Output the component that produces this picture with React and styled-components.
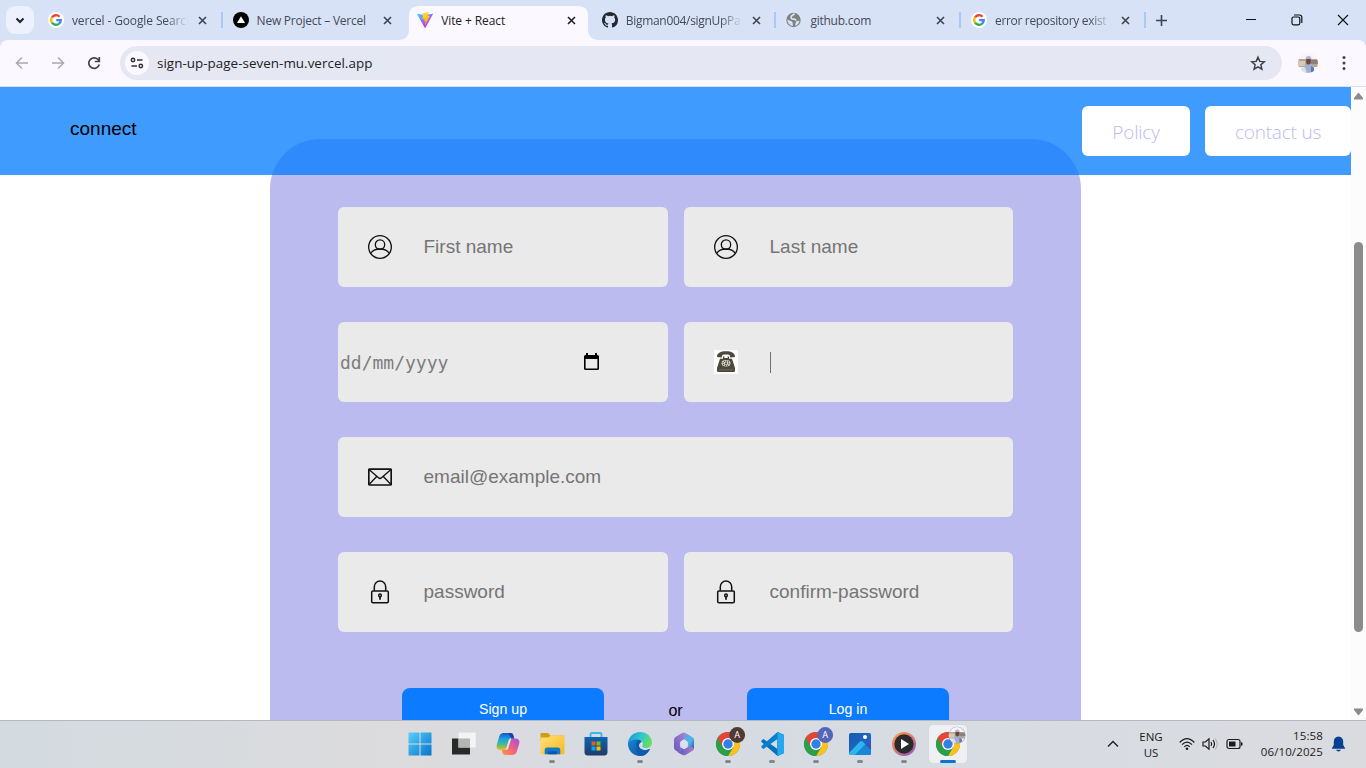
import React from "react";
import styled, { createGlobalStyle } from "styled-components";

const GlobalStyle = createGlobalStyle`
  * { box-sizing: border-box; }
  html, body { margin: 0; overflow: hidden; }
  body { font-family: "Open Sans", "Noto Sans", sans-serif; background: #fff; }
  svg { display: block; flex: none; }
`;

/* ---------- browser frame ---------- */
const Screen = styled.div`
  width: 1366px;
  height: 768px;
  display: flex;
  flex-direction: column;
  overflow: hidden;
`;
const TabStrip = styled.header`
  height: 40px;
  flex: none;
  display: flex;
  align-items: flex-start;
  background: #d8e2f6;
  padding-left: 6px;
`;
const TabSearch = styled.button`
  width: 28px;
  height: 28px;
  margin: 6px 4px 0 0;
  padding: 0;
  border: 0;
  border-radius: 9px;
  background: #edf0fd;
  display: grid;
  place-items: center;
`;
const TabBox = styled.div`
  width: 184.6px;
  height: 40px;
  flex: none;
  display: flex;
  align-items: center;
  padding: 0 0 0 10px;
  position: relative;
  color: ${(p) => (p.$active ? "#1f2024" : "#454a57")};
  z-index: ${(p) => (p.$active ? 1 : 0)};
`;
const TabShape = styled.svg`
  position: absolute;
  left: -7px;
  top: 0;
  z-index: -1;
`;
const TabTitle = styled.span`
  width: 116px;
  height: 20px;
  margin: 2px 0 0 8px;
  font-size: 12px;
  line-height: 20px;
  letter-spacing: ${(p) => p.$track}px;
  white-space: nowrap;
  overflow: hidden;
  ${(p) => p.$fade && "mask-image: linear-gradient(90deg, #000 94px, transparent 116px);"}
`;
const CloseSlot = styled.span`
  width: 29px;
  height: 20px;
  display: grid;
  place-items: center;
`;
const Divider = styled.i`
  width: 2px;
  height: 16px;
  margin: 0 0 0 auto;
  background: #a8c7fa;
`;
const NewTab = styled.span`
  width: 32px;
  height: 40px;
  display: grid;
  place-items: center;
`;
const WindowButtons = styled.div`
  margin-left: auto;
  height: 40px;
  display: flex;
  svg { margin: 14px 17px 0; }
`;
const Toolbar = styled.div`
  height: 47px;
  display: flex;
  align-items: center;
  background: #fbf9ff;
  border-bottom: 1px solid #dfdfea;
  border-radius: 8px 8px 0 0;
  padding: 0 15px 0 14px;
`;
const ToolbarBack = styled.div`
  background: #d8e2f6;
  flex: none;
`;
const NavIcons = styled.div`
  display: flex;
  gap: 20px;
  width: 106px;
`;
const Omnibox = styled.div`
  width: 1162px;
  height: 34px;
  border-radius: 17px;
  background: #e5e8f3;
  display: flex;
  align-items: center;
  padding: 0 15px 0 5px;
`;
const SiteInfo = styled.span`
  width: 24px;
  height: 24px;
  border-radius: 50%;
  background: #fbf9ff;
  display: grid;
  place-items: center;
`;
const Address = styled.span`
  flex: 1;
  margin-left: 8px;
  font-size: 13.4px;
  letter-spacing: 0.04px;
  color: #202124;
`;
const Profile = styled.span`
  margin: 0 17px 0 16px;
`;

/* ---------- page ---------- */
const Viewport = styled.div`
  height: 633px;
  flex: none;
  display: flex;
  overflow: hidden;
  background: #fff;
`;
const Page = styled.main`
  width: 1351px;
  font-family: "Liberation Sans", Arial, sans-serif;
`;
const NavBar = styled.nav`
  height: 88px;
  position: relative;
  z-index: 1;
  display: flex;
  align-items: flex-start;
  padding: 19px 0 0 70px;
  background: rgba(0, 122, 255, 0.75);
`;
const Brand = styled.span`
  font-size: 19px;
  line-height: 22px;
  margin: 12px auto 0 0;
  color: #000;
`;
const NavLink = styled.a`
  height: 50px;
  width: ${(p) => p.$w}px;
  margin-left: 15px;
  border-radius: 6px;
  background: #fff;
  color: #bbbaf0;
  font: 300 19px/52px "Open Sans", "Noto Sans", sans-serif;
  letter-spacing: ${(p) => p.$track}px;
  text-align: center;
  white-space: nowrap;
`;
const Card = styled.form`
  width: 811px;
  height: 700px;
  margin: -36px 0 0 270px;
  padding: 68px 68px 0;
  border-radius: 50px;
  background: #bbbbef;
`;
const Fields = styled.div`
  display: grid;
  grid-template-columns: 330px 329px;
  gap: 35px 16px;
`;
const Field = styled.label`
  height: 80px;
  border-radius: 6px;
  background: #eaeaea;
  display: flex;
  align-items: center;
  padding-left: 30px;
  font-size: 19px;
  color: #757575;
  grid-column: ${(p) => (p.$wide ? "1 / -1" : "auto")};
`;
const Placeholder = styled.span`
  margin-left: 31.5px;
`;
const DateField = styled(Field)`
  padding: 0 68px 0 2px;
  justify-content: space-between;
  font: 18px "DejaVu Sans Mono", monospace;
  color: #7d7d7d;
`;
const Caret = styled.i`
  width: 1px;
  height: 21px;
  margin-left: 32px;
  background: #6f6f6f;
`;
const Actions = styled.div`
  margin-top: 56px;
  display: flex;
  padding-left: 64px;
`;
const Action = styled.button`
  width: 202px;
  height: 44px;
  padding: 0 0 2px;
  border: 0;
  border-radius: 8px;
  background: #0d7bff;
  color: #fff;
  font: 14.2px "Liberation Sans", Arial, sans-serif;
`;
const Or = styled.span`
  width: 143px;
  text-align: center;
  font-size: 16px;
  line-height: 46px;
  color: #000;
`;
const Scrollbar = styled.aside`
  width: 15px;
  display: flex;
  flex-direction: column;
  align-items: center;
  background: #fcfcfc;
  padding: 5px 0 4px;
`;
const Thumb = styled.div`
  width: 9px;
  height: 390px;
  margin: 142px 0 auto;
  border-radius: 5px;
  background: #8b8b8b;
`;

/* ---------- taskbar ---------- */
const Taskbar = styled.footer`
  height: 48px;
  flex: none;
  display: flex;
  border-top: 1px solid #b6b8bf;
  padding-left: 398px;
  background: linear-gradient(90deg, #d3dbe0 0, #dcdbdd 29%, #d6dbe3 48%, #d7dce3 66%, #dadbdf 100%);
`;
const AppSlot = styled.span`
  width: 44px;
  height: 47px;
  display: flex;
  flex-direction: column;
  align-items: center;
  padding-top: 4px;
`;
const AppTile = styled.span`
  width: 38px;
  height: 38px;
  border-radius: 4px;
  background: ${(p) => (p.$active ? "#eef0f3" : "transparent")};
  box-shadow: ${(p) => (p.$active ? "0 0 1px #b9bdc6" : "none")};
  display: flex;
  flex-direction: column;
  align-items: center;
`;
const IconHolder = styled.span`
  width: 30px;
  height: 28px;
  flex: none;
  display: flex;
  justify-content: center;
  align-items: flex-end;
  margin: 3px 0 4px;
  svg { overflow: visible; }
`;
const Running = styled.i`
  width: ${(p) => (p.$active ? 16 : 6)}px;
  height: 3px;
  flex: none;
  border-radius: 2px;
  background: ${(p) => (p.$active ? "#0b74cf" : "#85878b")};
`;
const Tray = styled.div`
  margin-left: auto;
  display: flex;
  align-items: center;
  padding: 0 20px 1px 0;
  color: #1b1b1b;
  font-size: 11.5px;
  line-height: 16px;
`;
const Language = styled.div`
  width: 40px;
  margin: 2px 8px 0 12px;
  text-align: center;
`;
const Status = styled.div`
  display: flex;
  align-items: center;
  gap: 7px;
`;
const Clock = styled.div`
  width: 70px;
  margin: 0 8px 0 10px;
  text-align: right;
  letter-spacing: 0.12px;
  white-space: nowrap;
`;

/* ---------- icons ---------- */
const Google = () => (
  <svg width="16" height="16" viewBox="0 0 16 16">
    <circle cx="8" cy="8" r="8" fill="#fff" />
    <g fill="none" strokeWidth="2.3">
      <path d="M11.5 4.7A4.8 4.8 0 0 0 4 5.4" stroke="#ea4335" />
      <path d="M4 5.3A4.8 4.8 0 0 0 4 10.7" stroke="#fbbc05" />
      <path d="M4 10.6A4.8 4.8 0 0 0 11.2 11.6" stroke="#34a853" />
      <path d="M8.2 8.1H12.8A4.8 4.8 0 0 1 11 11.7" stroke="#4285f4" />
    </g>
  </svg>
);
const VercelMark = () => (
  <svg width="16" height="16" viewBox="0 0 16 16">
    <circle cx="8" cy="8" r="8" />
    <path d="M8 4.2 12 11H4z" fill="#fff" />
  </svg>
);
const ViteMark = () => (
  <svg width="16" height="16" viewBox="0 0 256 257">
    <defs>
      <linearGradient id="va" x1="0" x2=".6" y1=".05" y2=".8"><stop stopColor="#41d1ff" /><stop offset="1" stopColor="#bd34fe" /></linearGradient>
      <linearGradient id="vb" x1=".4" x2=".5" y1="0" y2=".9"><stop stopColor="#ffea83" /><stop offset=".1" stopColor="#ffdd35" /><stop offset="1" stopColor="#ffa800" /></linearGradient>
    </defs>
    <path fill="url(#va)" d="M255.153 37.938 134.897 252.976c-2.483 4.44-8.862 4.466-11.382.048L.875 37.958c-2.746-4.814 1.371-10.646 6.827-9.67l120.385 21.517a6.54 6.54 0 0 0 2.322-.004l117.867-21.483c5.438-.991 9.574 4.796 6.877 9.62Z" />
    <path fill="url(#vb)" d="M185.432.063 96.44 17.501a3.27 3.27 0 0 0-2.634 3.014l-5.474 92.456a3.27 3.27 0 0 0 3.997 3.378l24.777-5.718c2.318-.535 4.413 1.507 3.936 3.838l-7.361 36.047c-.495 2.426 1.782 4.5 4.151 3.78l15.304-4.649c2.372-.72 4.652 1.36 4.15 3.788l-11.698 56.621c-.732 3.542 3.979 5.473 5.943 2.437l1.313-2.028 72.516-144.72c1.215-2.423-.88-5.186-3.54-4.672l-25.505 4.922c-2.396.462-4.435-1.77-3.759-4.114l16.646-57.705c.677-2.35-1.37-4.583-3.769-4.113Z" />
  </svg>
);
const GitHubMark = () => (
  <svg width="16" height="16" viewBox="0 0 16 16">
    <path fill="#24292f" d="M8 0C3.58 0 0 3.58 0 8c0 3.54 2.29 6.53 5.47 7.59.4.07.55-.17.55-.38 0-.19-.01-.82-.01-1.49-2.01.37-2.53-.49-2.69-.94-.09-.23-.48-.94-.82-1.13-.28-.15-.68-.52-.01-.53.63-.01 1.08.58 1.23.82.72 1.21 1.87.87 2.33.66.07-.52.28-.87.51-1.07-1.78-.2-3.64-.89-3.64-3.95 0-.87.31-1.59.82-2.15-.08-.2-.36-1.02.08-2.12 0 0 .67-.21 2.2.82a7.6 7.6 0 0 1 4 0c1.53-1.04 2.2-.82 2.2-.82.44 1.1.16 1.92.08 2.12.51.56.82 1.27.82 2.15 0 3.07-1.87 3.75-3.65 3.95.29.25.54.73.54 1.48 0 1.07-.01 1.93-.01 2.2 0 .21.15.46.55.38A8.01 8.01 0 0 0 16 8c0-4.42-3.58-8-8-8" />
  </svg>
);
const GlobeMark = () => (
  <svg width="16" height="16" viewBox="0 0 16 16">
    <circle cx="7.5" cy="8" r="7.2" fill="#80807f" />
    <path d="M8.500 1.800 6.600 3.200Q4.800 4 5 5.600q.3 1.500 2.300 1.600h1.200q1.300.2 1.200 1.600" fill="none" stroke="#d8e2f6" strokeWidth="1.700" />
    <path d="M1.400 7.500 4.500 9q1.800.2 2.200 1.800l.2 3.200-2-.6Q1.200 11.500 1.400 7.500zM10 9.500l3.500-1q0 2.500-2.500 4.500l-2 .8z" fill="#d8e2f6" />
  </svg>
);
const CloseMark = ({ color = "#3e4350" }) => (
  <svg width="9" height="9" viewBox="0 0 9 9"><path d="m1 1 7 7M8 1 1 8" stroke={color} strokeWidth="1.6" /></svg>
);
const Person = () => (
  <svg width="24" height="24" viewBox="0 0 24 24" fill="none" stroke="#111" strokeWidth="1.3">
    <circle cx="12" cy="12" r="11.35" /><circle cx="12" cy="9.6" r="4.7" />
    <path d="M2.7 18.5C4.2 15.8 7.4 14 12 14s7.8 1.8 9.3 4.5" />
  </svg>
);
const Phone = () => (
  <svg width="24" height="24" viewBox="0 0 24 24">
    <path fill="#fcfcf8" d="M0 0h24v24H0z" />
    <path fill="#4d483e" d="M3 7C2.800 3 6.500 1.200 12 1.200S21.200 3 21 7l-4.400.6c-.8-.8-.6-2-1-2.700-2.300-.5-4.900-.5-7.200 0-.4.700-.2 1.900-1 2.700z" />
    <path fill="#4d483e" d="M9 6.500h1.300v1.400h3.400V6.500H15v2.300h3l3 9.200v3.400l-1.400.6H4.400L3 21.400V18l3-9.200h3z" />
    <ellipse cx="12" cy="13.300" rx="4.400" ry="3.300" fill="#dfded3" />
    <ellipse cx="12" cy="13.300" rx="3" ry="2.200" fill="none" stroke="#4d483e" strokeWidth="1.200" strokeDasharray="1.200 .8" />
    <circle cx="12" cy="13.300" r="1.100" fill="#4d483e" />
    <path d="M5 19.800h14" stroke="#77736a" strokeWidth=".8" />
  </svg>
);
const Mail = () => (
  <svg width="24" height="24" viewBox="0 0 24 24" fill="none" stroke="#111" strokeWidth="1.3" strokeLinejoin="round">
    <rect x=".8" y="4.200" width="22.400" height="15.800" rx=".8" strokeWidth="1.700" />
    <path d="m1 4.500 9.500 8.300c.9.800 2.100.8 3 0L23 4.500M1 19.500l7.700-8M23 19.500l-7.700-8" />
  </svg>
);
const Lock = () => (
  <svg width="24" height="24" viewBox="0 0 24 24" fill="none" stroke="#111" strokeWidth="1.500">
    <rect x="3.700" y="10.900" width="16.600" height="11.900" rx="1.200" />
    <path d="M6.300 10.700V6.700a5.700 5.700 0 0 1 11.400 0v4" />
    <circle cx="12" cy="15.400" r="1.300" /><path d="M12 16.500v3.300" strokeWidth="1.700" />
  </svg>
);
const Calendar = () => (
  <svg width="17" height="18" viewBox="0 0 17 18">
    <path d="M3 0h2v2h7V0h2v2h.5Q16 2 16 3.500v12Q16 17 14.500 17h-12Q1 17 1 15.500v-12Q1 2 2.500 2H3zM2.600 6v9.400h11.800V6z" fillRule="evenodd" />
  </svg>
);

const Windows = () => (
  <svg width="24" height="24" viewBox="0 0 24 24">
    <defs><linearGradient id="win" x1="0" y1="0" x2="1" y2="1"><stop stopColor="#55d0fb" /><stop offset="1" stopColor="#0873ca" /></linearGradient></defs>
    <path d="M.5.500h11v11H.500zm12 0h11v11h-11zm-12 12h11v11H.500zm12 0h11v11h-11z" fill="url(#win)" />
  </svg>
);
const TaskView = () => (
  <svg width="24" height="24" viewBox="0 0 24 24">
    <path d="M0 6.500h18v16H0z" fill="#272a29" />
    <path d="M6.500.500h17.200v15H6.500z" fill="#f5f5f5" opacity=".96" />
    <path d="M6.500 6.500H18v9H6.500z" fill="#b3b5b5" />
  </svg>
);
const Copilot = () => (
  <svg width="24" height="24" viewBox="0 0 24 24">
    <defs>
      <linearGradient id="cp1" x1="0" y1="0" x2="0" y2="1"><stop stopColor="#1757ce" /><stop offset=".35" stopColor="#1aa1df" /><stop offset=".7" stopColor="#50bd81" /><stop offset="1" stopColor="#f5bc1d" /></linearGradient>
      <linearGradient id="cp2" x1="1" y1="0" x2="0" y2="1"><stop stopColor="#a04de2" /><stop offset=".5" stopColor="#f06180" /><stop offset="1" stopColor="#ff993f" /></linearGradient>
    </defs>
    <path fill="url(#cp1)" d="M7.500 1h7c2 0 2.500 1.200 3 3l.7 2.500h-2.500c-2 0-2.800 1-3.400 3l-1.800 6c-.5 1.700-1.400 2.500-3.200 2.500H4.700C1.500 18-.1 15.900.9 12.500l2.300-8C4 2.200 5.300 1 7.500 1z" />
    <path fill="url(#cp2)" d="M16.500 23h-7c-2 0-2.700-1.200-3.200-3L5.800 18h2.500c1.800 0 2.700-1 3.300-3l1.800-6c.5-1.700 1.400-2.500 3.200-2.500h2.700c3.200 0 4.800 2.100 3.800 5.500l-2.300 7.500c-.7 2.300-2.100 3.500-4.300 3.500z" />
    <path fill="#243fa4" d="M12 1h2.500c2 0 2.500 1.200 3 3l.7 2.500h-2.800z" />
    <path fill="#e3e5ee" d="M13.300 7.500q.7-1 2-1l-3.200 10q-.5 1.500-2 1.500l1.500-5z" />
  </svg>
);
const Explorer = () => (
  <svg width="25" height="24" viewBox="0 0 25 24">
    <defs><linearGradient id="fold" x1="0" y1="0" x2="1" y2="1"><stop stopColor="#ffe17a" /><stop offset="1" stopColor="#f7b91f" /></linearGradient></defs>
    <path d="M.5 2Q.5 1 1.500 1H8l2.500 2.500H24V9H.500z" fill="#d79a13" />
    <path d="M.500 5.500h8L11 3.300h12.500q1 0 1 1v17q0 1-1 1h-22q-1 0-1-1z" fill="url(#fold)" />
    <path d="M4.700 22.300V18q0-2.500 2.500-2.500h10.600q2.500 0 2.500 2.500v4.300z" fill="#1378c7" />
    <path d="M8 19.300h9v3H8z" fill="#075aa8" />
  </svg>
);
const Store = () => (
  <svg width="24" height="24" viewBox="0 0 24 24">
    <defs><linearGradient id="sto" x1="0" y1="0" x2="0" y2="1"><stop stopColor="#0b66b6" /><stop offset="1" stopColor="#203a67" /></linearGradient></defs>
    <path d="M6.500 6V2.500Q6.500 1 8 1h8q1.500 0 1.500 1.500V6" fill="none" stroke="#3bb7ee" strokeWidth="1.900" />
    <path d="M.500 5h23v15q0 3.500-3.500 3.500H4Q.500 23.500.500 20z" fill="url(#sto)" />
    <path d="M7.500 9.500h4v4h-4z" fill="#f35325" /><path d="M12.500 9.500h4v4h-4z" fill="#81bc06" /><path d="M7.500 14.500h4v4h-4z" fill="#05a6f0" /><path d="M12.500 14.500h4v4h-4z" fill="#ffba08" />
  </svg>
);
const Edge = () => (
  <svg width="24" height="24" viewBox="0 0 24 24">
    <defs>
      <linearGradient id="ed1" x1="0" y1=".2" x2="1" y2=".5"><stop stopColor="#1698d8" /><stop offset=".55" stopColor="#35c6d0" /><stop offset="1" stopColor="#69df5b" /></linearGradient>
      <linearGradient id="ed2" x1="0" y1="0" x2="1" y2="1"><stop stopColor="#1689d8" /><stop offset="1" stopColor="#114a9a" /></linearGradient>
    </defs>
    <path fill="url(#ed2)" d="M0 12c0-4.500 3-6.500 7-6.500 3 0 6 1.500 6.500 4.500-3 .5-3.500 5-.5 7 2.500 1.700 6 1.300 9 0-2 4.200-5.500 7-10 7C5.400 24 0 18.600 0 12z" />
    <path fill="#0d5cab" d="M8 12c0-2 1.500-4 4-4l1.500 2c-3 1-3.500 5-.5 7 2.500 1.700 6 1.300 9 0-2 4.200-5.500 7-9 7-3.500-1.500-5-6-5-12z" />
    <path fill="url(#ed1)" d="M0 12C0 5.400 5.400 0 12 0s12 4.800 12 10.500c0 3.500-2.700 5.500-6 5.500-3 0-4.500-1-3.500-2.500 1.700-2.600-1-6-5.500-6C4.500 7.500 1 9 0 12z" />
  </svg>
);
const Office = () => (
  <svg width="24" height="24" viewBox="0 0 24 24">
    <defs>
      <linearGradient id="of1" x1="0" y1="1" x2="1" y2="0"><stop stopColor="#6256bb" /><stop offset="1" stopColor="#b385d8" /></linearGradient>
      <linearGradient id="of2" x1="0" y1="0" x2="1" y2="1"><stop stopColor="#3eaede" /><stop offset=".55" stopColor="#51b7ea" /><stop offset="1" stopColor="#343da5" /></linearGradient>
      <linearGradient id="of3" x1="0" y1="0" x2="1" y2="0"><stop stopColor="#5c58bd" /><stop offset="1" stopColor="#ab78c8" /></linearGradient>
    </defs>
    <path d="M13 .800Q11.500.300 10 1L3.500 5Q2 6 2 7.700v8Q2 17.500 3.500 18.300l2.800 1.600q1.700.4 2-1.400V11q0-1.500 1.200-2.300L14 6V2.500Q14 1.200 13 .8z" fill="url(#of1)" />
    <path d="m13 .8 7.500 4.400Q22 6.200 22 8v7.800q0 1.500-1.500 2.500l-2 1L15.700 16v-5q0-1.500-1.200-2.300L12 7.200 14 6V2.500Q14 1.200 13 .8z" fill="url(#of2)" />
    <path d="m8.300 15.300 2.500 1.500q1.200.7 2.400 0l4.300-2.600 3.500 1.200q1 .8.400 2.300-.4.700-1.200 1.200l-6.700 4q-1.500.8-3 0l-6-3.500q3.500 1 3.800-1z" fill="url(#of3)" />
    <path d="m12 7.700 3.700 2.200v4.300L12 16.300l-3.700-2.100V9.900z" fill="#dce2ec" />
  </svg>
);
const Portrait = ({ size }) => (
  <svg width={size} height={size} viewBox="0 0 20 20">
    <defs><clipPath id="face"><circle cx="10" cy="10" r="10" /></clipPath></defs>
    <g clipPath="url(#face)">
      <path fill="#f5f5f7" d="M0 0h20v20H0z" />
      <path fill="#b5a595" d="M0 6h20v8H0z" /><path fill="#d6c9ba" d="M0 8h7v5H0z" /><path fill="#8e8278" d="M13 7h7v4h-7z" />
      <path fill="#a5adcb" d="M6 20v-7l3-2h4l3 3v6z" /><path fill="#d6def0" d="M3 15l4-1 2 6H4z" /><path fill="#4f81b8" d="m13 13 3 2v5h-3z" />
      <ellipse cx="10.500" cy="8" rx="2.400" ry="3.500" fill="#69473f" /><path fill="#b1b4d2" d="M7.500 6q.3-3 3-3t3 3z" />
    </g>
  </svg>
);
const Chrome = ({ badge, color, photo }) => (
  <svg width="30" height="28" viewBox="-3 -4 30 28">
    <circle cx="12" cy="12" r="12" fill="#2e9d4d" />
    <path d="M12 12 22.400 6A12 12 0 0 1 12 24l5.200-9z" fill="#fcc21b" />
    <path d="M12 6h10.400A12 12 0 0 0 1.600 6l5.200 9z" fill="#e94335" />
    <path d="M12 24 17.200 15H6.800L1.600 6A12 12 0 0 0 12 24z" fill="#2b9d4b" />
    <circle cx="12" cy="12" r="6" fill="#fff" /><circle cx="12" cy="12" r="4.700" fill="#337fe8" />
    {badge && <><circle cx="21.200" cy="3" r="7.900" fill={color} /><text x="21.200" y="6.200" fill="#fff" fontFamily="Roboto, sans-serif" fontSize="9" textAnchor="middle">{badge}</text></>}
    {photo && <g transform="translate(12.700 -5)"><circle cx="8.300" cy="8.300" r="8.500" fill="#8d8f94" /><Portrait size={16.5} /></g>}
  </svg>
);
const VSCode = () => (
  <svg width="24" height="24" viewBox="0 0 24 24">
    <path d="M17.500 0 24 3v18l-6.500 3-15.900-13.900Q.9 9.400 1.400 8.800l1.300-1.400q.7-.7 1.500 0L17.500 17z" fill="#0872bc" />
    <path d="M17.500 24 24 21V3l-6.500-3L1.600 13.900Q.9 14.600 1.400 15.200l1.300 1.400q.7.700 1.500 0L17.500 7z" fill="#0880cf" />
    <path d="M17.500 0 24 3v18l-6.500 3z" fill="#29a7ee" />
  </svg>
);
const Photos = () => (
  <svg width="24" height="24" viewBox="0 0 24 24">
    <defs><linearGradient id="ph" x1="0" y1="0" x2="1" y2="1"><stop stopColor="#155bb0" /><stop offset=".6" stopColor="#2264c5" /><stop offset="1" stopColor="#4e3cb0" /></linearGradient></defs>
    <rect x="1" y="1" width="22" height="22" rx="2" fill="url(#ph)" />
    <path d="m1 21 10.700-11.300q1.500-1.500 3 0L17.500 12.500 7 23H3q-2 0-2-2z" fill="#28b8ed" /><path d="m7 23 9-9.200q1.300-1 2.600 0L23 18v3q0 2-2 2z" fill="#1687d9" />
    <circle cx="17" cy="5" r="2" fill="#fff" />
  </svg>
);
const Media = () => (
  <svg width="24" height="24" viewBox="0 0 24 24">
    <defs><linearGradient id="md" x1="0" y1="0" x2=".7" y2="1"><stop stopColor="#ff9f45" /><stop offset=".5" stopColor="#dd7c68" /><stop offset="1" stopColor="#9b5cbb" /></linearGradient></defs>
    <circle cx="12" cy="12" r="12" fill="url(#md)" /><circle cx="12" cy="12" r="9.700" fill="#2b2a2c" /><path d="m9 7 8 5-8 5z" fill="#fff" />
  </svg>
);

const TABS = [
  { title: "vercel - Google Search", Icon: Google, fade: true, track: -0.12, line: true },
  { title: "New Project – Vercel", Icon: VercelMark, track: -0.23 },
  { title: "Vite + React", Icon: ViteMark, active: true, track: -0.1 },
  { title: "Bigman004/signUpPage", Icon: GitHubMark, fade: true, track: -0.3, line: true },
  { title: "github.com", Icon: GlobeMark, track: -0.25, line: true },
  { title: "error repository exist", Icon: Google, fade: true, track: -0.32, line: true },
];
const APPS = [
  { icon: <Windows /> }, { icon: <TaskView /> }, { icon: <Copilot /> },
  { icon: <Explorer />, run: true }, { icon: <Store /> }, { icon: <Edge />, run: true },
  { icon: <Office /> }, { icon: <Chrome badge="A" color="#513a33" />, run: true },
  { icon: <VSCode />, run: true }, { icon: <Chrome badge="A" color="#5565b9" />, run: true },
  { icon: <Photos />, run: true }, { icon: <Media />, run: true },
  { icon: <Chrome photo />, run: true, active: true },
];

export default function App() {
  return (
    <Screen>
      <GlobalStyle />
      <TabStrip>
        <TabSearch><svg width="10" height="7" viewBox="0 0 10 7"><path d="m1.500 1.500 3.500 3.500 3.500-3.500" fill="none" stroke="#202124" strokeWidth="2" /></svg></TabSearch>
        {TABS.map(({ title, Icon, active, fade, track, line }) => (
          <TabBox key={title} $active={active}>
            {active && <TabShape width="198" height="40" viewBox="0 0 198 40"><path d="M0 40Q9 39 9 30V16Q9 6 19 6H178Q188 6 188 16V30Q188 39 198 40z" fill="#fbf9ff" /></TabShape>}
            <Icon />
            <TabTitle $fade={fade} $track={track}>{title}</TabTitle>
            <CloseSlot><CloseMark color={active ? "#202124" : undefined} /></CloseSlot>
            {line && <Divider />}
          </TabBox>
        ))}
        <NewTab><svg width="11" height="11" viewBox="0 0 11 11"><path d="M5.500 0v11M0 5.500h11" stroke="#3e4350" strokeWidth="1.600" /></svg></NewTab>
        <WindowButtons>
          <svg width="12" height="12" viewBox="0 0 12 12"><path d="M1 5.500h10" stroke="#111" /></svg>
          <svg width="12" height="12" viewBox="0 0 12 12" fill="none" stroke="#111" strokeWidth="1.200"><rect x="1" y="3" width="7.800" height="7.800" rx="1.500" /><path d="M3 1h5.500Q10.800 1 10.800 3.300V9" /></svg>
          <svg width="12" height="12" viewBox="0 0 12 12"><path d="m1 1 10 10M11 1 1 11" stroke="#111" strokeWidth="1.100" /></svg>
        </WindowButtons>
      </TabStrip>
      <ToolbarBack>
        <Toolbar>
          <NavIcons>
            <svg width="16" height="16" viewBox="0 0 16 16" fill="none" stroke="#a8a9b0" strokeWidth="1.500"><path d="M14 8H3M8 2.500 2.500 8 8 13.500" /></svg>
            <svg width="16" height="16" viewBox="0 0 16 16" fill="none" stroke="#a8a9b0" strokeWidth="1.500"><path d="M2 8h11M8 2.500 13.500 8 8 13.500" /></svg>
            <svg width="16" height="16" viewBox="0 0 16 16" fill="none" stroke="#3e4350" strokeWidth="1.700"><path d="M13.200 9.500A5.300 5.300 0 1 1 12 4.500L13.300 6M13.300 2v4.500H8.800" /></svg>
          </NavIcons>
          <Omnibox>
            <SiteInfo><svg width="14" height="14" viewBox="0 0 14 14" fill="none" stroke="#303238" strokeWidth="1.500"><circle cx="3" cy="4" r="1.700" /><path d="M7 4h5.500M1.500 10H7" /><circle cx="10.800" cy="10" r="1.700" /></svg></SiteInfo>
            <Address>sign-up-page-seven-mu.vercel.app</Address>
            <svg width="17" height="17" viewBox="0 0 17 17"><path d="m8 2.200 1.800 4.200 4.500.4-3.400 3 1 4.400L8 11.900l-3.900 2.300 1-4.400-3.400-3 4.500-.4z" fill="none" stroke="#3e4046" strokeWidth="1.500" /></svg>
          </Omnibox>
          <Profile><Portrait size={20} /></Profile>
          <svg width="14" height="16" viewBox="0 0 14 16" fill="#3e4350"><circle cx="9" cy="2.500" r="1.500" /><circle cx="9" cy="8" r="1.500" /><circle cx="9" cy="13.500" r="1.500" /></svg>
        </Toolbar>
      </ToolbarBack>

      <Viewport>
        <Page>
          <NavBar>
            <Brand>connect</Brand>
            <NavLink $w={108} $track={-0.2}>Policy</NavLink>
            <NavLink $w={146} $track={-0.2}>contact us</NavLink>
          </NavBar>
          <Card>
            <Fields>
              <Field><Person /><Placeholder>First name</Placeholder></Field>
              <Field><Person /><Placeholder>Last name</Placeholder></Field>
              <DateField as="label"><span>dd/mm/yyyy</span><Calendar /></DateField>
              <Field><Phone /><Caret /></Field>
              <Field $wide><Mail /><Placeholder>email@example.com</Placeholder></Field>
              <Field><Lock /><Placeholder>password</Placeholder></Field>
              <Field><Lock /><Placeholder>confirm-password</Placeholder></Field>
            </Fields>
            <Actions>
              <Action type="button">Sign up</Action>
              <Or>or</Or>
              <Action type="button">Log in</Action>
            </Actions>
          </Card>
        </Page>
        <Scrollbar>
          <svg width="11" height="8" viewBox="0 0 11 8"><path d="M5.500.500 10 6V7.500H1V6z" fill="#8b8b8b" /></svg>
          <Thumb />
          <svg width="11" height="8" viewBox="0 0 11 8"><path d="M5.500 7.500 10 2V.500H1V2z" fill="#8b8b8b" /></svg>
        </Scrollbar>
      </Viewport>

      <Taskbar>
        {APPS.map((a, i) => (
          <AppSlot key={i}>
            <AppTile $active={a.active}>
              <IconHolder>{a.icon}</IconHolder>
              {a.run && <Running $active={a.active} />}
            </AppTile>
          </AppSlot>
        ))}
        <Tray>
          <svg width="12" height="8" viewBox="0 0 12 8"><path d="m1 6.500 5-5 5 5" fill="none" stroke="#1b1b1b" strokeWidth="1.300" /></svg>
          <Language>ENG<br />US</Language>
          <Status>
            <svg width="16" height="14" viewBox="0 0 16 14" fill="none" stroke="#1b1b1b" strokeWidth="1.200"><path d="M.7 5.500Q8-2.300 15.300 5.500M3 7.700Q8 2.500 13 7.700M5.300 9.800q2.700-2.800 5.400 0" /><circle cx="8" cy="11.800" r="1.300" fill="#1b1b1b" stroke="none" /></svg>
            <svg width="17" height="14" viewBox="0 0 17 14" fill="none" stroke="#1b1b1b" strokeWidth="1.200"><path d="M1 5h2.500L7 1.800v10.400L3.500 9H1zM9 5q1.500 2 0 4M11 3q3 4 0 8" /><path d="M13 1.500q4.500 5.500 0 11" stroke="#b5b8bd" /></svg>
            <svg width="17" height="12" viewBox="0 0 17 12"><rect x="1" y="1.500" width="13" height="9" rx="2" fill="none" stroke="#1b1b1b" strokeWidth="1.200" /><path d="M3 3.500h6.500v5H3zM15 4l1.500.700v2.600L15 8z" fill="#1b1b1b" /></svg>
          </Status>
          <Clock>15:58<br />06/10/2025</Clock>
          <svg width="15" height="16" viewBox="0 0 15 16" fill="#073f91"><path d="M7.500.500Q12 .800 12.200 5.500V9l1.800 3v.700H1V12l1.800-3V5.500Q3 .800 7.500.500zM5 13.700h5q-.7 1.800-2.500 1.800T5 13.700z" /></svg>
        </Tray>
      </Taskbar>
    </Screen>
  );
}
